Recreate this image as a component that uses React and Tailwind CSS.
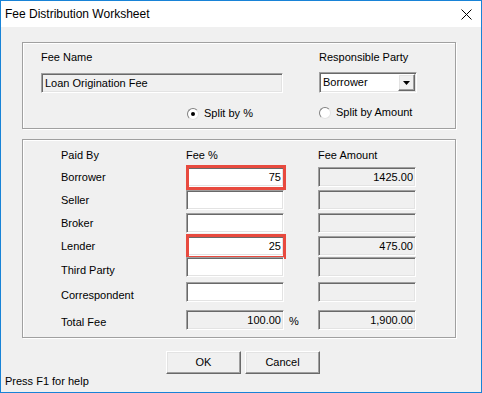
import React from "react";

const sunken =
  "border border-t-[#a0a0a0] border-l-[#a0a0a0] border-b-white border-r-white shadow-[inset_1px_1px_0_#696969,inset_-1px_-1px_0_#e3e3e3]";
const raised =
  "border border-t-white border-l-white border-b-[#696969] border-r-[#696969] shadow-[inset_-1px_-1px_0_#a0a0a0,inset_1px_1px_0_#e3e3e3]";
const groupBox =
  "border border-[#a0a0a0] shadow-[inset_1px_1px_0_#ffffff,1px_1px_0_#ffffff]";

function Radio({ checked, label }) {
  return (
    <div className="flex items-center h-[13px]">
      <div className="relative w-[12px] h-[12px] rounded-full bg-white border border-t-[#808080] border-l-[#808080] border-b-[#e3e3e3] border-r-[#e3e3e3] flex items-center justify-center">
        {checked && <div className="w-[4px] h-[4px] rounded-full bg-black" />}
      </div>
      <span className="ml-[5px] leading-[13px]">{label}</span>
    </div>
  );
}

function Field({ value, disabled, red, w = "w-[98px]" }) {
  return (
    <div
      className={`relative ${w} h-[20px] ${sunken} ${
        disabled ? "bg-[#f0f0f0]" : "bg-white"
      } flex items-center justify-end pr-[2px] leading-[13px]`}
    >
      <span>{value}</span>
      {red && (
        <div className="absolute -top-[3px] -left-[1px] -right-[3px] -bottom-[4px] border-[3px] border-[#e84a3f]" />
      )}
    </div>
  );
}

function Row({ label, fee, amount, red, mt, lpt }) {
  return (
    <div className={`flex items-center ${mt}`}>
      <div className={`w-[125px] leading-[13px] ${lpt}`}>{label}</div>
      <div className="w-[132px] flex items-center">
        <Field value={fee} red={red} />
      </div>
      <Field value={amount} disabled />
    </div>
  );
}

export default function App() {
  return (
    <div className="w-[482px] h-[393px] border border-[#1883d7] bg-[#f0f0f0] text-[11px] text-black font-['Liberation_Sans',Arial,sans-serif] flex flex-col">
      {/* Title bar */}
      <div className="h-[26px] bg-white flex items-center justify-between pl-[4px] pr-[9px]">
        <span className="text-[12px]">Fee Distribution Worksheet</span>
        <svg width="11" height="11" viewBox="0 0 11 11">
          <path d="M0.5 0.5 L10.5 10.5 M10.5 0.5 L0.5 10.5" stroke="#000" strokeWidth="1" />
        </svg>
      </div>

      {/* Top group */}
      <div className={`mt-[15px] ml-[21px] w-[434px] h-[87px] ${groupBox} flex pt-[8px] pl-[18px]`}>
        <div className="w-[278px] flex flex-col">
          <div className="leading-[13px]">Fee Name</div>
          <div className={`mt-[9px] w-[242px] h-[20px] ${sunken} bg-[#f0f0f0] flex items-center pl-[3px] leading-[13px]`}>
            Loan Origination Fee
          </div>
          <div className="mt-[14px] ml-[146px]">
            <Radio checked label="Split by %" />
          </div>
        </div>
        <div className="flex flex-col">
          <div className="leading-[13px]">Responsible Party</div>
          <div className={`mt-[8px] w-[98px] h-[21px] ${sunken} bg-white flex items-center justify-between pl-[3px] pr-[1px]`}>
            <span className="leading-[13px]">Borrower</span>
            <div className={`w-[17px] h-[17px] bg-[#f0f0f0] ${raised} flex items-center justify-center`}>
              <svg width="7" height="4" viewBox="0 0 7 4">
                <path d="M0 0 H7 L3.5 4 Z" fill="#000" />
              </svg>
            </div>
          </div>
          <div className="mt-[13px]">
            <Radio label="Split by Amount" />
          </div>
        </div>
      </div>

      {/* Second group */}
      <div className={`mt-[10px] ml-[21px] w-[434px] h-[199px] ${groupBox} pt-[9px] pl-[38px] flex flex-col`}>
        <div className="flex leading-[13px]">
          <div className="w-[125px]">Paid By</div>
          <div className="w-[132px]">Fee %</div>
          <div>Fee Amount</div>
        </div>
        <Row label="Borrower" fee="75" amount="1425.00" red mt="mt-[5px]" lpt="" />
        <Row label="Seller" fee="" amount="" mt="mt-[3px]" lpt="" />
        <Row label="Broker" fee="" amount="" mt="mt-[3px]" lpt="" />
        <Row label="Lender" fee="25" amount="475.00" red mt="mt-[3px]" lpt="" />
        <Row label="Third Party" fee="" amount="" mt="mt-[1px]" lpt="pt-[7px]" />
        <Row label="Correspondent" fee="" amount="" mt="mt-[4px]" lpt="pt-[8px]" />
        <div className="flex items-center mt-[8px]">
          <div className="w-[125px] leading-[13px] pt-[5px]">Total Fee</div>
          <div className="w-[132px] flex items-center">
            <Field value="100.00" disabled />
            <span className="ml-[5px] pt-[3px] leading-[13px]">%</span>
          </div>
          <Field value="1,900.00" disabled />
        </div>
      </div>

      {/* Buttons */}
      <div className="mt-[13px] ml-[165px] flex gap-[4px]">
        <button className={`w-[75px] h-[23px] bg-[#f0f0f0] ${raised} leading-[13px]`}>OK</button>
        <button className={`w-[75px] h-[23px] bg-[#f0f0f0] ${raised} leading-[13px]`}>Cancel</button>
      </div>

      {/* Status */}
      <div className="mt-[1px] pl-[4px] leading-[13px]">Press F1 for help</div>
    </div>
  );
}
